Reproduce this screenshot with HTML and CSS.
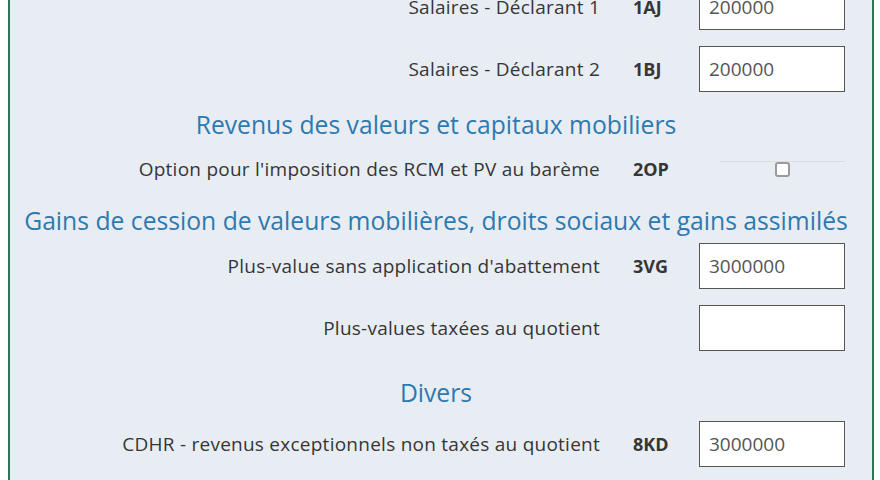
FILE: index.html
```html
<!DOCTYPE html>
<html lang="fr">
<head>
<meta charset="utf-8">
<title>Déclaration</title>
<link rel="stylesheet" href="styles.css">
</head>
<body>
<div class="panel">
  <div class="row row-first">
    <span class="label">Salaires - Déclarant 1</span>
    <span class="code">1AJ</span>
    <span class="field"><span class="input">200000</span></span>
  </div>
  <div class="row">
    <span class="label">Salaires - Déclarant 2</span>
    <span class="code">1BJ</span>
    <span class="field"><span class="input">200000</span></span>
  </div>
  <h2 class="section section-rcm">Revenus des valeurs et capitaux mobiliers</h2>
  <div class="row row-check">
    <span class="label">Option pour l'imposition des RCM et PV au barème</span>
    <span class="code">2OP</span>
    <span class="field field-check"><span class="check"></span></span>
  </div>
  <h2 class="section section-gains">Gains de cession de valeurs mobilières, droits sociaux et gains assimilés</h2>
  <div class="row row-after-gains">
    <span class="label">Plus-value sans application d'abattement</span>
    <span class="code">3VG</span>
    <span class="field"><span class="input">3000000</span></span>
  </div>
  <div class="row">
    <span class="label">Plus-values taxées au quotient</span>
    <span class="code"></span>
    <span class="field"><span class="input"></span></span>
  </div>
  <h2 class="section section-divers">Divers</h2>
  <div class="row row-after-divers">
    <span class="label">CDHR - revenus exceptionnels non taxés au quotient</span>
    <span class="code">8KD</span>
    <span class="field"><span class="input">3000000</span></span>
  </div>
</div>
</body>
</html>
```
FILE: styles.css
```css
html, body {
  margin: 0;
  padding: 0;
  background: #ffffff;
  font-family: "Open Sans", "DejaVu Sans", sans-serif;
  color: #363636;
}
body {
  height: 480px;
  overflow: hidden;
}
.panel {
  margin: -16px 0 0 8px;
  width: 862px;
  min-height: 520px;
  background: #e8edf4;
  border-left: 2px solid #237a56;
  border-right: 2px solid #237a56;
  display: flex;
  flex-direction: column;
}
.row {
  display: grid;
  grid-template-columns: 590px 99px 146px;
  align-items: center;
  height: 46px;
  margin-top: 16px;
  font-size: 19px;
}
.row-first {
  margin-top: 0;
}
.row-after-gains {
  margin-top: 5px;
}
.row-after-divers {
  margin-top: 11px;
}
.label {
  text-align: right;
  letter-spacing: 0.25px;
}
.code {
  font-weight: 700;
  font-size: 18px;
  padding-left: 33px;
}
.field {
  display: flex;
  align-items: center;
  height: 100%;
}
.input {
  box-sizing: border-box;
  width: 146px;
  height: 46px;
  border: 1px solid #555;
  background: #fff;
  padding: 0 9px;
  display: flex;
  align-items: center;
  color: #555;
}
.section {
  margin: 0;
  padding-right: 10px;
  height: 34px;
  line-height: 34px;
  text-align: center;
  font-weight: 400;
  font-size: 24.7px;
  color: #2e79b0;
  white-space: nowrap;
}
.section-rcm {
  margin-top: 16px;
}
.section-gains {
  margin-top: 20px;
}
.section-divers {
  margin-top: 25px;
}
.row-check {
  height: 30px;
  margin-top: 12px;
}
.field-check {
  position: relative;
  justify-content: center;
  padding-left: 21px;
  box-sizing: border-box;
}
.field-check::before {
  content: "";
  position: absolute;
  left: 21px;
  right: 0;
  top: 7px;
  border-top: 1px solid #d9dde3;
}
.check {
  position: relative;
  box-sizing: border-box;
  width: 15px;
  height: 15px;
  border: 2px solid #9a9a9a;
  border-radius: 3px;
  background: #fff;
}
```
